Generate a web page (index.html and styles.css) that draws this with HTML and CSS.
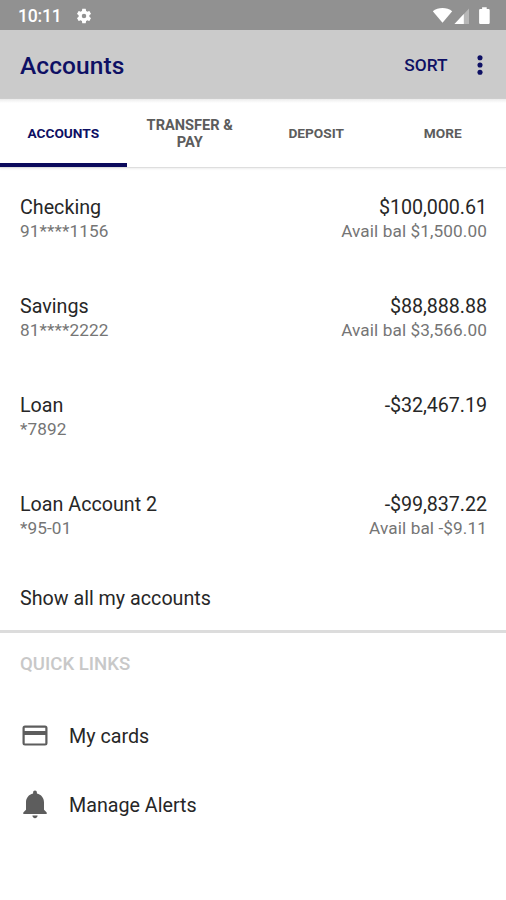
FILE: index.html
```html
<!DOCTYPE html>
<html lang="en">
<head>
<meta charset="utf-8">
<title>Accounts</title>
<link rel="stylesheet" href="styles.css">
</head>
<body>
<div class="status">
  <span class="time">10:11</span>
  <svg class="gear" viewBox="0 0 24 24"><path d="M19.14 12.94c.04-.3.06-.61.06-.94 0-.32-.02-.64-.07-.94l2.03-1.58a.49.49 0 0 0 .12-.61l-1.92-3.32a.49.49 0 0 0-.59-.22l-2.39.96c-.5-.38-1.03-.7-1.62-.94l-.36-2.54a.48.48 0 0 0-.48-.41h-3.84c-.24 0-.43.17-.47.41l-.36 2.54c-.59.24-1.13.57-1.62.94l-2.39-.96a.49.49 0 0 0-.59.22L2.74 8.87c-.12.21-.08.47.12.61l2.03 1.58c-.05.3-.09.63-.09.94s.02.64.07.94l-2.03 1.58a.49.49 0 0 0-.12.61l1.92 3.32c.12.22.37.29.59.22l2.39-.96c.5.38 1.03.7 1.62.94l.36 2.54c.05.24.24.41.48.41h3.84c.24 0 .44-.17.47-.41l.36-2.54c.59-.24 1.13-.56 1.62-.94l2.39.96c.22.08.47 0 .59-.22l1.92-3.32c.12-.22.07-.47-.12-.61zM12 15a3 3 0 1 1 0-6 3 3 0 0 1 0 6z"/></svg>
  <svg class="signals" viewBox="0 0 60 18"><path d="M0.3 4.3C5.5-.1 14.5-.1 19.7 4.3L10 15.8z"/><path d="M36.5 1.5V17H22z" opacity=".35"/><path d="M31.3 7V17H22z"/><path d="M47.8 2h1.8V.3h4.6V2H56q1.2 0 1.2 1.2v12.6q0 1.2-1.2 1.2h-8.2q-1.2 0-1.2-1.2V3.2Q46.600 2 47.800 2z"/></svg>
</div>
<header class="bar">
  <h1>Accounts</h1>
  <span class="sort">SORT</span>
  <svg class="dots" viewBox="0 0 6 20"><circle cx="3" cy="2.700" r="2.550"/><circle cx="3" cy="10" r="2.550"/><circle cx="3" cy="17.300" r="2.550"/></svg>
</header>
<nav class="tabs">
  <div class="tab active"><span>ACCOUNTS</span></div>
  <div class="tab wrapped"><span>TRANSFER &amp;<br>PAY</span></div>
  <div class="tab"><span>DEPOSIT</span></div>
  <div class="tab"><span>MORE</span></div>
</nav>
<main>
  <div class="account">
    <div><p class="name">Checking</p><p class="sub">91****1156</p></div>
    <div class="right"><p class="name amount">$100,000.61</p><p class="sub">Avail bal $1,500.00</p></div>
  </div>
  <div class="account">
    <div><p class="name">Savings</p><p class="sub">81****2222</p></div>
    <div class="right"><p class="name amount">$88,888.88</p><p class="sub">Avail bal $3,566.00</p></div>
  </div>
  <div class="account">
    <div><p class="name">Loan</p><p class="sub">*7892</p></div>
    <div class="right"><p class="name amount">-$32,467.19</p></div>
  </div>
  <div class="account">
    <div><p class="name">Loan Account 2</p><p class="sub">*95-01</p></div>
    <div class="right"><p class="name amount">-$99,837.22</p><p class="sub">Avail bal -$9.11</p></div>
  </div>
  <p class="name all">Show all my accounts</p>
</main>
<section class="links">
  <h2>QUICK LINKS</h2>
  <div class="link"><svg viewBox="0 0 30 30"><path fill-rule="evenodd" d="M5 4.600h20q2.500 0 2.500 2.500v15q0 2.500-2.500 2.500H5q-2.500 0-2.500-2.500v-15Q2.500 4.600 5 4.600zM4.700 6.800V10h20.600V6.800zM4.700 14v8.500h20.600V14z"/></svg><span class="name">My cards</span></div>
  <div class="link"><svg viewBox="0 0 30 30"><path d="M15 .6c1.200 0 1.900.9 1.900 2v.8c4.400 1 7.100 4.500 7.100 9v7.400l2.700 2.700V24.100H3.300V22.500L6 19.800v-7.400c0-4.500 2.700-8 7.100-9V2.600c0-1.100.7-2 1.900-2zM12.400 25.600h5.200c0 1.500-1.100 2.600-2.600 2.600s-2.600-1.100-2.600-2.600z"/></svg><span class="name">Manage Alerts</span></div>
</section>
</body>
</html>
```
FILE: styles.css
```css
* { box-sizing: border-box; }
body { margin: 0; height: 900px; overflow: hidden; background: #fff; font-family: Roboto, sans-serif; color: #272727; }
h1, h2, p { margin: 0; }
svg { display: block; flex: none; }
.status { height: 30px; background: #919191; display: flex; align-items: center; padding: 1px 15px 0 18px; fill: #fff; color: #fff; }
.time { font-size: 17.600px; font-weight: 500; letter-spacing: -0.2px; width: 57px; line-height: 24px; }
.gear { width: 18px; height: 18px; }
.signals { width: 60px; height: 18px; margin-left: auto; transform: translateX(1.500px); }
.bar { height: 69px; background: #cbcbcb; display: flex; align-items: center; padding: 0 23px 0 20px; color: #0e1064; fill: #0e1064; }
h1 { font-size: 24.500px; font-weight: 500; letter-spacing: 0.1px; line-height: 30px; padding-top: 2px; }
.sort { margin-left: auto; font-size: 17.300px; font-weight: 500; }
.dots { width: 6px; height: 20px; margin-left: 29px; margin-right: 0.5px; }
.tabs { height: 69px; display: grid; grid-template-columns: repeat(4, 1fr); border-bottom: 1px solid #dedede; box-shadow: 0 1px 2px #eee; background: linear-gradient(#ececec, #fff 4px); }
.tab { display: flex; align-items: center; justify-content: center; text-align: center; color: #5c5c5c; font-size: 13.700px; font-weight: 700; line-height: 17px; padding-top: 1px; }
.wrapped { font-size: 14.600px; padding-top: 2px; }
.active { color: #0e1064; border-bottom: 4px solid #0b0a5c; padding-top: 5px; }
main { height: 465px; border-bottom: 3px solid #dcdcdc; }
.account { height: 99px; padding: 27px 19px 0 20px; display: flex; justify-content: space-between; }
.right { text-align: right; }
.name { font-size: 19.700px; line-height: 26px; letter-spacing: 0; }
.amount { letter-spacing: -0.06px; }
.sub { font-size: 17.200px; line-height: 21px; color: #757575; letter-spacing: 0.1px; }
.all { padding: 22px 20px 0; }
h2 { font-size: 18.600px; font-weight: 500; color: #c8c8c8; line-height: 24px; padding: 19px 20px 0; }
.link { height: 69px; display: flex; align-items: center; padding-left: 20px; gap: 19px; fill: #5d5d5d; }
h2 + .link { margin-top: 26px; }
.link svg { width: 30px; height: 30px; margin-bottom: 2px; }
```
